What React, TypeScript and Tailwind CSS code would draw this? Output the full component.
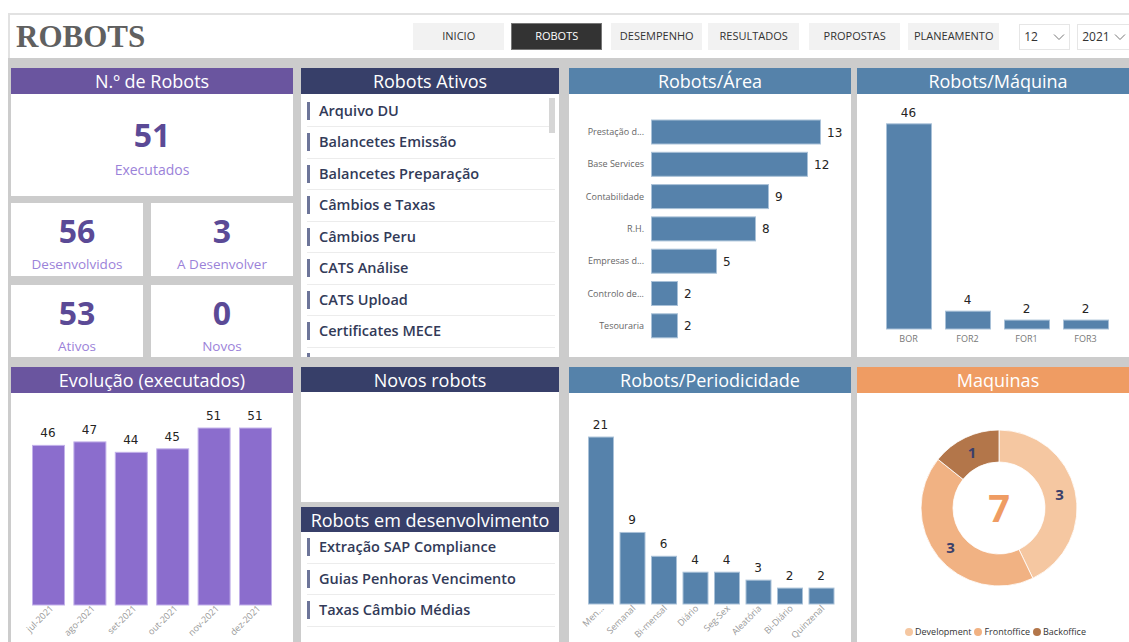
import React from 'react';

const SANS = { fontFamily: '"Open Sans", "Noto Sans", sans-serif' };

const ativos = [
  'Arquivo DU',
  'Balancetes Emissão',
  'Balancetes Preparação',
  'Câmbios e Taxas',
  'Câmbios Peru',
  'CATS Análise',
  'CATS Upload',
  'Certificates MECE',
];

const emDesenvolvimento = ['Extração SAP Compliance', 'Guias Penhoras Vencimento', 'Taxas Câmbio Médias'];

const areas = [
  { label: 'Prestação d...', value: 13 },
  { label: 'Base Services', value: 12 },
  { label: 'Contabilidade', value: 9 },
  { label: 'R.H.', value: 8 },
  { label: 'Empresas d...', value: 5 },
  { label: 'Controlo de...', value: 2 },
  { label: 'Tesouraria', value: 2 },
];

const maquinas = [
  { label: 'BOR', value: 46 },
  { label: 'FOR2', value: 4 },
  { label: 'FOR1', value: 2 },
  { label: 'FOR3', value: 2 },
];

const evolucao = [
  { label: 'jul-2021', value: 46 },
  { label: 'ago-2021', value: 47 },
  { label: 'set-2021', value: 44 },
  { label: 'out-2021', value: 45 },
  { label: 'nov-2021', value: 51 },
  { label: 'dez-2021', value: 51 },
];

const periodicidade = [
  { label: 'Men...', value: 21 },
  { label: 'Semanal', value: 9 },
  { label: 'Bi-mensal', value: 6 },
  { label: 'Diário', value: 4 },
  { label: 'Seg-Sex', value: 4 },
  { label: 'Aleatória', value: 3 },
  { label: 'Bi-Diário', value: 2 },
  { label: 'Quinzenal', value: 2 },
];

const donut = [
  { label: 'Development', value: 3, color: '#f5c7a1' },
  { label: 'Frontoffice', value: 3, color: '#f1b283' },
  { label: 'Backoffice', value: 1, color: '#b3764a' },
];

const valueFont = '"DejaVu Sans", sans-serif';
const axisFont = '"Open Sans", sans-serif';

function Title({ text, bg, h = 'h-[26px]' }: { text: string; bg: string; h?: string }) {
  return (
    <div className={`${h} ${bg} flex items-center justify-center text-white text-[18px] leading-none`} style={SANS}>
      {text}
    </div>
  );
}

function Kpi({ value, label, big }: { value: string; label: string; big?: boolean }) {
  return (
    <div className={`bg-white flex flex-col items-center h-full ${big ? 'pt-[25px]' : 'pt-[12px]'}`} style={SANS}>
      <div className="font-bold text-[#5b4a96] text-[32px] leading-[32px]">{value}</div>
      <div className={`text-[#9b82d9] leading-[20px] ${big ? 'mt-[9px] text-[14px]' : 'mt-[7px] text-[13.5px]'}`}>{label}</div>
    </div>
  );
}

function ListItem({ text }: { text: string }) {
  return (
    <div className="h-[31.5px] shrink-0 flex items-center ml-[6px] mr-[4px] border-b border-[#ececec]">
      <span className="w-[3px] h-[18px] bg-[#6d7599]" />
      <span className="ml-[9px] text-[14.5px] font-semibold text-[#323a58]" style={SANS}>
        {text}
      </span>
    </div>
  );
}

function AreaChart() {
  return (
    <svg width="282" height="263" className="block">
      {areas.map((a, i) => {
        const cy = 38 + i * 32.3;
        const w = a.value * 13;
        return (
          <g key={a.label}>
            <text x="75" y={cy + 3} textAnchor="end" fontSize="9" fill="#666" fontFamily={axisFont}>
              {a.label}
            </text>
            <rect x="82.5" y={cy - 12} width={w} height="24" fill="#5682ab" stroke="#a9c1d8" strokeWidth="1" />
            <text x={82 + w + 7} y={cy + 4.5} fontSize="12" fill="#252423" fontFamily={valueFont}>
              {a.value}
            </text>
          </g>
        );
      })}
    </svg>
  );
}

function MaquinaChart() {
  return (
    <svg width="282" height="263" className="block">
      {maquinas.map((m, i) => {
        const x = 29 + i * 59;
        const h = m.value * 4.46;
        return (
          <g key={m.label}>
            <rect x={x + 0.5} y={235 - h} width="45" height={h} fill="#5682ab" stroke="#a9c1d8" strokeWidth="1" />
            <text x={x + 22.5} y={235 - h - 7} textAnchor="middle" fontSize="12" fill="#252423" fontFamily={valueFont}>
              {m.value}
            </text>
            <text x={x + 22.5} y="248" textAnchor="middle" fontSize="9" fill="#777" fontFamily={axisFont}>
              {m.label}
            </text>
          </g>
        );
      })}
    </svg>
  );
}

function EvolucaoChart() {
  return (
    <svg width="282" height="249" className="block">
      {evolucao.map((e, i) => {
        const x = 21 + i * 41.4;
        const h = e.value * 3.47;
        const cx = x + 16;
        return (
          <g key={e.label}>
            <rect x={x + 0.5} y={212 - h} width="32" height={h} fill="#8b6dcd" stroke="#c2b1ea" strokeWidth="1" />
            <text x={cx} y={212 - h - 8} textAnchor="middle" fontSize="12" fill="#252423" fontFamily={valueFont}>
              {e.value}
            </text>
            <text
              x={cx + 6}
              y="216"
              textAnchor="end"
              fontSize="9"
              fill="#999"
              fontFamily={axisFont}
              transform={`rotate(-45 ${cx + 6} 216)`}
            >
              {e.label}
            </text>
          </g>
        );
      })}
    </svg>
  );
}

function PeriodicidadeChart() {
  return (
    <svg width="282" height="249" className="block">
      {periodicidade.map((p, i) => {
        const x = 19 + i * 31.5;
        const h = p.value * 7.95;
        const cx = x + 12.5;
        return (
          <g key={p.label}>
            <rect x={x + 0.5} y={211 - h} width="25" height={h} fill="#5682ab" stroke="#a9c1d8" strokeWidth="1" />
            <text x={cx} y={211 - h - 8} textAnchor="middle" fontSize="12" fill="#252423" fontFamily={valueFont}>
              {p.value}
            </text>
            <text
              x={cx + 4}
              y="216"
              textAnchor="end"
              fontSize="9"
              fill="#999"
              fontFamily={axisFont}
              transform={`rotate(-45 ${cx + 4} 216)`}
            >
              {p.label}
            </text>
          </g>
        );
      })}
    </svg>
  );
}

function pt(cx: number, cy: number, r: number, deg: number) {
  const a = (deg * Math.PI) / 180;
  return [cx + r * Math.sin(a), cy - r * Math.cos(a)];
}

function slice(cx: number, cy: number, r0: number, r1: number, a0: number, a1: number) {
  const large = a1 - a0 > 180 ? 1 : 0;
  const [x0, y0] = pt(cx, cy, r1, a0);
  const [x1, y1] = pt(cx, cy, r1, a1);
  const [x2, y2] = pt(cx, cy, r0, a1);
  const [x3, y3] = pt(cx, cy, r0, a0);
  return `M${x0} ${y0} A${r1} ${r1} 0 ${large} 1 ${x1} ${y1} L${x2} ${y2} A${r0} ${r0} 0 ${large} 0 ${x3} ${y3} Z`;
}

function DonutChart() {
  const total = donut.reduce((s, d) => s + d.value, 0);
  const cx = 142;
  const cy = 115;
  let acc = 0;
  return (
    <svg width="282" height="249" className="block">
      {donut.map((d) => {
        const a0 = (acc / total) * 360;
        acc += d.value;
        const a1 = (acc / total) * 360;
        const [lx, ly] = pt(cx, cy, 62, (a0 + a1) / 2);
        return (
          <g key={d.label}>
            <path d={slice(cx, cy, 46, 78, a0, a1)} fill={d.color} stroke="#fff" strokeWidth="0.8" />
            <text x={lx} y={ly + 6} textAnchor="middle" fontSize="15" fontWeight="700" fill="#3b3f6a" fontFamily={axisFont}>
              {d.value}
            </text>
          </g>
        );
      })}
      <text x={cx} y={cy + 14} textAnchor="middle" fontSize="38" fontWeight="700" fill="#ef9c63" fontFamily={axisFont}>
        {total}
      </text>
    </svg>
  );
}

export default function App() {
  const nav = ['INICIO', 'ROBOTS', 'DESEMPENHO', 'RESULTADOS', 'PROPOSTAS', 'PLANEAMENTO'];
  const navGap = ['ml-0', 'ml-[7px]', 'ml-[9px]', 'ml-[6px]', 'ml-[10px]', 'ml-[8px]'];

  return (
    <div className="w-[1129px] h-[642px] overflow-hidden bg-white flex flex-col">
      {/* top bar */}
      <div className="mt-[13px] ml-[8px] h-[45px] shrink-0 border-2 border-b-0 border-r-0 border-[#e2e2e2] flex items-center">
        <h1 className="ml-[6px] text-[31px] font-bold text-[#606060] leading-none" style={{ fontFamily: '"Liberation Serif", serif' }}>
          ROBOTS
        </h1>
        <nav className="ml-[268px] flex items-center" style={SANS}>
          {nav.map((n, i) => (
            <div
              key={n}
              className={`${navGap[i]} w-[91px] h-[27px] flex items-center justify-center text-[11px] ${
                n === 'ROBOTS' ? 'bg-[#333] text-white border border-[#777]' : 'bg-[#f2f2f2] text-[#333]'
              }`}
            >
              {n}
            </div>
          ))}
          <div className="ml-[20px] w-[51px] h-[26px] border border-[#e6e6e6] flex items-center justify-between px-[4px] text-[12px] text-[#333]">
            <span>12</span>
            <svg width="12" height="8" viewBox="0 0 12 8">
              <path d="M1 1.5 L6 6.5 L11 1.5" fill="none" stroke="#777" strokeWidth="1" />
            </svg>
          </div>
          <div className="ml-[7px] w-[60px] h-[26px] border border-[#e6e6e6] flex items-center px-[4px] text-[12px] text-[#333]">
            <span>2021</span>
            <svg className="ml-[4px]" width="12" height="8" viewBox="0 0 12 8">
              <path d="M1 1.5 L6 6.5 L11 1.5" fill="none" stroke="#777" strokeWidth="1" />
            </svg>
          </div>
        </nav>
      </div>

      {/* dashboard */}
      <div className="ml-[8px] flex-1 bg-[#cccccc] pt-[10px] pl-[3px] flex items-start overflow-hidden">
        {/* column 1 */}
        <div className="w-[282px] shrink-0 flex flex-col">
          <Title text="N.º de Robots" bg="bg-[#6a559f]" />
          <div className="h-[102px]">
            <Kpi value="51" label="Executados" big />
          </div>
          <div className="mt-[7px] h-[73px] flex gap-[8px]">
            <div className="w-[132px]"><Kpi value="56" label="Desenvolvidos" /></div>
            <div className="flex-1"><Kpi value="3" label="A Desenvolver" /></div>
          </div>
          <div className="mt-[9px] h-[72px] flex gap-[8px]">
            <div className="w-[132px]"><Kpi value="53" label="Ativos" /></div>
            <div className="flex-1"><Kpi value="0" label="Novos" /></div>
          </div>
          <div className="mt-[10px]">
            <Title text="Evolução (executados)" bg="bg-[#6a559f]" />
            <div className="bg-white">
              <EvolucaoChart />
            </div>
          </div>
        </div>

        {/* column 2 */}
        <div className="ml-[8px] w-[258px] shrink-0 flex flex-col">
          <Title text="Robots Ativos" bg="bg-[#373f69]" />
          <div className="h-[263px] bg-white relative overflow-hidden flex flex-col pt-[1.5px]">
            {ativos.map((a) => (
              <ListItem key={a} text={a} />
            ))}
            {/* next row peeking under the fold */}
            <div className="ml-[6px] mt-[5px] w-[3px] h-[18px] bg-[#6d7599] shrink-0" />
            <div className="absolute left-[248px] top-[4px] w-[6px] h-[35px] bg-[#d6d6d6]" />
          </div>
          <div className="mt-[10px]">
            <Title text="Novos robots" bg="bg-[#373f69]" h="h-[25px]" />
            <div className="h-[110px] bg-white" />
            <div className="mt-[5px]">
              <Title text="Robots em desenvolvimento" bg="bg-[#373f69]" h="h-[25px]" />
              <div className="h-[120px] bg-white flex flex-col">
                {emDesenvolvimento.map((a) => (
                  <ListItem key={a} text={a} />
                ))}
              </div>
            </div>
          </div>
        </div>

        {/* column 3 */}
        <div className="ml-[10px] w-[282px] shrink-0 flex flex-col">
          <Title text="Robots/Área" bg="bg-[#5582aa]" />
          <div className="bg-white">
            <AreaChart />
          </div>
          <div className="mt-[10px]">
            <Title text="Robots/Periodicidade" bg="bg-[#5582aa]" />
            <div className="bg-white">
              <PeriodicidadeChart />
            </div>
          </div>
        </div>

        {/* column 4 */}
        <div className="ml-[6px] w-[282px] shrink-0 flex flex-col">
          <Title text="Robots/Máquina" bg="bg-[#5582aa]" />
          <div className="bg-white">
            <MaquinaChart />
          </div>
          <div className="mt-[10px]">
            <Title text="Maquinas" bg="bg-[#ef9c63]" />
            <div className="bg-white relative">
              <DonutChart />
              <div className="absolute left-[48px] top-[232px] flex items-center gap-[3px] text-[9px] text-[#333]" style={SANS}>
                {donut.map((d) => (
                  <span key={d.label} className="flex items-center gap-[2px]">
                    <span className="w-[8px] h-[8px] rounded-full" style={{ backgroundColor: d.color }} />
                    {d.label}
                  </span>
                ))}
              </div>
            </div>
          </div>
        </div>
      </div>
    </div>
  );
}
